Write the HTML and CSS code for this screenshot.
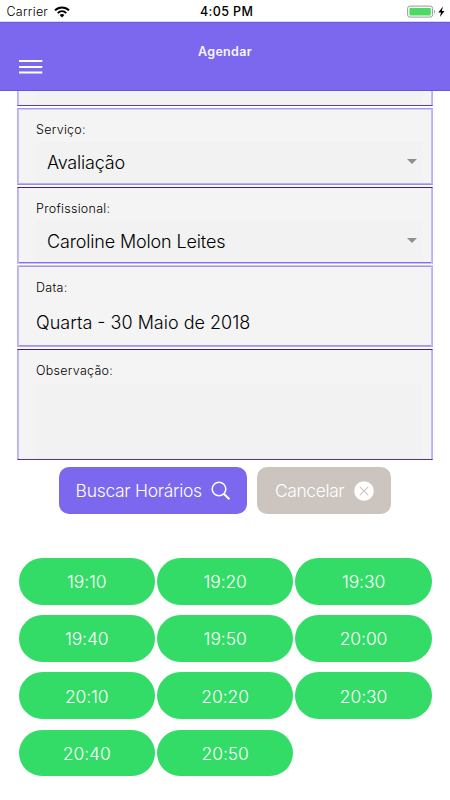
FILE: index.html
```html
<!DOCTYPE html>
<html lang="pt-BR">
<head>
<meta charset="utf-8">
<title>Agendar</title>
<link rel="stylesheet" href="styles.css">
</head>
<body>
<div class="status">
  <span class="carrier">Carrier</span>
  <svg class="wifi" width="16" height="12" viewBox="0 0 16 12"><g fill="none" stroke="#000" stroke-width="2"><path d="M1 4.4C5 .4 11 .4 15 4.4"/><path d="M3.7 7.1c2.5-2.4 6.1-2.4 8.6 0"/></g><path d="M5.6 8.9c1.4-1.3 3.4-1.3 4.8 0L8 11.4z"/></svg>
  <span class="clock">4:05 PM</span>
  <svg class="battery" width="40" height="14" viewBox="0 0 40 14"><rect x=".6" y="1.1" width="25" height="11" rx="2.3" fill="#fff" stroke="#999"/><rect x="2.4" y="3" width="21.4" height="7.4" rx=".8" fill="#4cd964"/><path d="M27 4.7c1.7.6 1.7 3.4 0 4z" fill="#aaa"/><path d="M36 1.4 31.3 7.4h2.7l-1.1 4.7 4.6-6.1h-2.7z"/></svg>
</div>
<header class="header">
  <h1 class="title">Agendar</h1>
  <svg class="menu" width="24" height="16" viewBox="0 0 24 16"><path d="M0 2h23.3M0 8h23.3M0 13.5h23.3" stroke="#fff" stroke-width="2"/></svg>
</header>
<main class="form">
  <section class="card stub"><div class="field"></div></section>
  <section class="card service"><label class="label">Serviço:</label><div class="field select"><span class="value v1">Avaliação</span><i class="caret"></i></div></section>
  <section class="card pro"><label class="label">Profissional:</label><div class="field select"><span class="value v2">Caroline Molon Leites</span><i class="caret"></i></div></section>
  <section class="card date"><label class="label">Data:</label><div class="value v3">Quarta - 30 Maio de 2018</div></section>
  <section class="card notes"><label class="label">Observação:</label><div class="field"></div></section>
</main>
<div class="actions">
  <button class="btn search"><span>Buscar Horários</span><svg width="20" height="20" viewBox="0 0 20 20"><circle cx="8" cy="8" r="6.8" fill="none" stroke="#fff" stroke-width="1.5"/><path d="m12.8 12.8 5.6 5.4" stroke="#fff" stroke-width="2.1"/></svg></button>
  <button class="btn cancel"><span>Cancelar</span><svg width="20" height="20" viewBox="0 0 20 20"><circle cx="10" cy="10" r="9.8" fill="#fff"/><path d="m5.8 5.8 8.4 8.4m0-8.4-8.4 8.4" stroke="#cbc4bf" stroke-width="1.1"/></svg></button>
</div>
<div class="times">
  <button class="time">19:10</button><button class="time">19:20</button><button class="time">19:30</button>
  <button class="time">19:40</button><button class="time">19:50</button><button class="time">20:00</button>
  <button class="time">20:10</button><button class="time">20:20</button><button class="time">20:30</button>
  <button class="time">20:40</button><button class="time">20:50</button>
</div>
</body>
</html>
```
FILE: styles.css
```css
* { box-sizing: border-box; }
body { margin: 0; width: 450px; height: 800px; overflow: hidden; background: #fff; color: #000; font-family: Inter, "Liberation Sans", sans-serif; }
button { border: 0; font-family: inherit; margin: 0; padding: 0; }
.status { height: 22px; padding: 0 3.5px 0 6.5px; display: grid; grid-template-columns: 47.5px 146px 1fr 40px; align-items: center; border-bottom: 1px solid #dcd8fa; font-size: 12.5px; line-height: 22px; }
.carrier { font-weight: 300; letter-spacing: .25px; padding-top: 1px; }
.clock { font-weight: 500; letter-spacing: .4px; padding-top: 1px; }
.header { height: 69px; background: #7c68ee; border-top: 1px solid #6b55e8; border-bottom: 1px solid #6b50e8; display: flex; flex-direction: column; padding: 20px 18.7px 0; }
.title { margin: 0; align-self: center; font-size: 12.5px; line-height: 18px; font-weight: 600; letter-spacing: .3px; color: #f7f5ff; }
.menu { margin-top: -2px; }
.form { width: 416px; margin-left: 17px; display: flex; flex-direction: column; }
.card { --top: #d0ccf8; --bottom: #b9b1f5; background: #f4f4f4; border: 1px solid #b9b1f5; padding: 0 9px 0 18px; box-shadow: inset 1px 0 #c4bdf7, inset -1px 0 #c4bdf7, inset 0 1px var(--top), inset 0 -1px var(--bottom); }
.field { background: #f2f2f2; }
.stub { --top: transparent; --bottom: transparent; height: 15px; border-top: 0; border-bottom-color: #5b36e0; }
.stub .field { height: 14px; }
.service { height: 77px; margin-top: 2px; border-top-color: #a39af0; border-bottom-color: #9a8dee; }
.pro { --top: transparent; --bottom: #8070ea; height: 77px; margin-top: 2px; border-top-color: #3914c9; border-bottom-color: #c9c3f8; }
.date { --top: #a096f1; --bottom: #a096f1; height: 82px; margin-top: 1px; border-top-color: #c9c3f8; border-bottom-color: #b1a8f4; }
.notes { --top: transparent; --bottom: transparent; height: 111px; margin-top: 2px; border-top-color: #3914c9; border-bottom-color: #4d2bdc; }
.label { display: block; height: 33px; padding-top: 12px; font-size: 12.5px; line-height: 18px; font-weight: 300; letter-spacing: .28px; }
.date .label { padding-top: 13px; }
.select { height: 41px; padding: 0 6px 0 11px; display: flex; align-items: center; justify-content: space-between; }
.value { font-size: 18px; line-height: 24px; font-weight: 300; }
.v1 { letter-spacing: -.2px; }
.v2 { letter-spacing: -.15px; }
.caret { width: 0; height: 0; border: 5.5px solid transparent; border-top-color: #8f8f8f; border-bottom: 0; margin-top: -3px; }
.v3 { margin-top: 12px; }
.notes .field { height: 76px; }
.actions { display: flex; gap: 10.4px; padding: 7px 0 0 58.6px; }
.btn { height: 47px; border-radius: 10px; color: #fff; display: flex; align-items: center; font-size: 17.5px; font-weight: 300; }
.search { width: 188.5px; background: #7c68ee; padding-left: 17px; gap: 9px; }
.cancel { width: 133.7px; background: #cbc4bf; padding-left: 17.4px; gap: 10px; }
.search span { letter-spacing: -.3px; }
.cancel span { letter-spacing: -.4px; }
.times { display: grid; grid-template-columns: repeat(3, 136.3px); column-gap: 2.1px; row-gap: 10.6px; margin: 44px 0 0 18.6px; }
.time { height: 46.6px; border-radius: 24px; background: #32dc66; color: #fff; font-size: 17.5px; font-weight: 300; letter-spacing: -.1px; padding-top: 1px; }
```
